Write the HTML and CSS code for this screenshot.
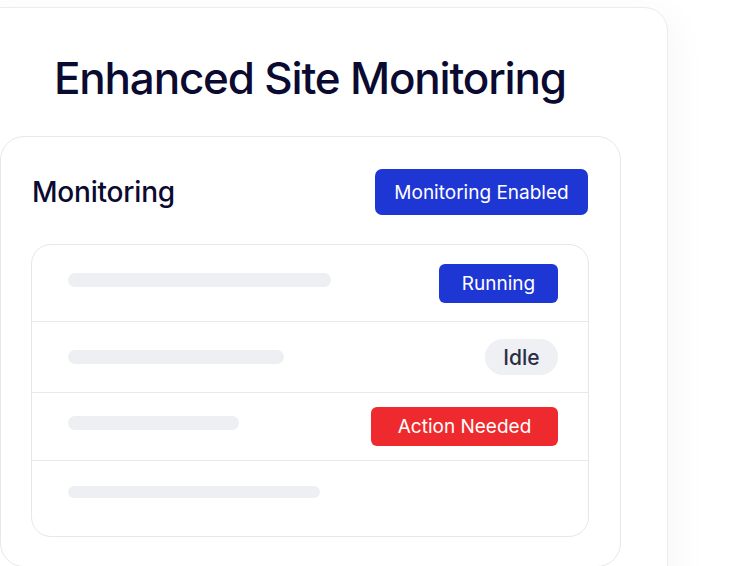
FILE: index.html
```html
<!DOCTYPE html>
<html>
<head>
<meta charset="utf-8">
<link rel="stylesheet" href="styles.css">
</head>
<body>
<div class="outer">
  <h1 class="title">Enhanced Site Monitoring</h1>
  <div class="panel">
    <div class="panel-head">
      <h2 class="panel-title">Monitoring</h2>
      <span class="badge badge-blue badge-lg">Monitoring Enabled</span>
    </div>
    <div class="list">
      <div class="row row-1">
        <span class="bar" style="width:263px"></span>
        <span class="badge badge-blue badge-run">Running</span>
      </div>
      <div class="row row-2">
        <span class="bar" style="width:216px"></span>
        <span class="pill">Idle</span>
      </div>
      <div class="row row-3">
        <span class="bar" style="width:171px"></span>
        <span class="badge badge-red badge-act">Action Needed</span>
      </div>
      <div class="row row-4">
        <span class="bar bar-thin" style="width:252px"></span>
      </div>
    </div>
  </div>
</div>
</body>
</html>
```

FILE: styles.css
```css
html, body {
  margin: 0;
  padding: 0;
  overflow: hidden;
  background: #ffffff;
  font-family: Inter, "Liberation Sans", sans-serif;
}

.outer {
  box-sizing: border-box;
  width: 700px;
  height: 620px;
  margin: 7px 0 0 -32px;
  padding: 0 46px 0 31px;
  border: 1px solid #ececee;
  border-radius: 24px;
  background: #ffffff;
  box-shadow: 8px 6px 36px rgba(0, 0, 0, 0.035);
}

.title {
  margin: 0;
  padding: 44px 0 0 54px;
  font-size: 44px;
  line-height: 53px;
  font-weight: 500;
  color: #0b0a30;
  letter-spacing: -1.2px;
}

.panel {
  box-sizing: border-box;
  margin-top: 31px;
  height: 431px;
  padding: 32px 32px 28px 31px;
  border: 1px solid #e8e8eb;
  border-radius: 24px;
  background: #ffffff;
}

.panel-head {
  display: flex;
  align-items: center;
  justify-content: space-between;
  height: 46px;
  margin-bottom: 29px;
}

.panel-title {
  margin: 0;
  font-size: 28px;
  font-weight: 500;
  color: #0b0a30;
  letter-spacing: -0.2px;
}

.badge {
  display: inline-flex;
  align-items: center;
  justify-content: center;
  color: #ffffff;
  font-size: 19px;
  font-weight: 400;
  border-radius: 6px;
  box-sizing: border-box;
}

.badge-blue { background: #1e36d4; }
.badge-red { background: #ef2a2e; }

.badge-lg { width: 213px; height: 46px; border-radius: 7px; }
.badge-run { width: 119px; height: 39px; }
.badge-act { width: 187px; height: 39px; }

.pill {
  display: inline-flex;
  align-items: center;
  justify-content: center;
  width: 73px;
  height: 36px;
  border-radius: 18px;
  background: #eef0f4;
  color: #2a2e45;
  font-size: 21px;
  font-weight: 500;
}

.list {
  margin: 0 -1px;
  border: 1px solid #e5e7eb;
  border-radius: 20px;
}

.row {
  display: flex;
  align-items: center;
  justify-content: space-between;
  padding: 0 30px 0 36px;
  border-top: 1px solid #e7e9ec;
}

.row:first-child { border-top: none; }

.row-1 { height: 76px; }
.row-1 .bar { margin-bottom: 6px; }
.row-2 { height: 70px; }
.row-3 { height: 67px; }
.row-3 .bar { margin-bottom: 8px; }
.row-4 { height: 75px; align-items: flex-start; }
.row-4 .bar { margin-top: 25px; }

.bar {
  display: block;
  height: 14px;
  border-radius: 7px;
  background: #edeff2;
}

.bar-thin { height: 12px; border-radius: 6px; }
```
